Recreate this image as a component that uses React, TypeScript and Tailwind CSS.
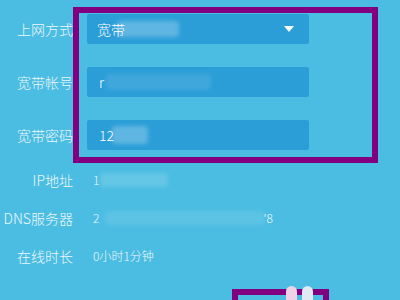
import React from "react";

const font = { fontFamily: '"Noto Sans CJK SC", "Noto Sans", sans-serif' };

function Blur({ w, h, className = "" }: { w: number; h: number; className?: string }) {
  return (
    <span
      className={"inline-block rounded-sm blur-[2px] " + className}
      style={{ width: w, height: h }}
    />
  );
}

function InputRow({ label, children }: { label: string; children: React.ReactNode }) {
  return (
    <div className="flex h-[30px] items-center">
      <div className="w-[73px] text-right text-[14px] font-light leading-none text-[#eef8fc]">{label}</div>
      <div className="ml-[14px] flex h-[30px] w-[222px] items-center rounded-[2px] bg-[#2b9ed8] pl-[10px] text-[14px] font-light text-white">
        {children}
      </div>
    </div>
  );
}

function InfoRow({ label, children }: { label: string; children: React.ReactNode }) {
  return (
    <div className="flex h-[20px] items-center">
      <div className="w-[73px] whitespace-nowrap text-right text-[14px] font-light leading-none text-[#eef8fc]">{label}</div>
      <div className="ml-[20px] flex items-center text-[12px] font-light leading-none text-[#eef8fc]">{children}</div>
    </div>
  );
}

export default function App() {
  return (
    <div className="relative h-[300px] w-[400px] overflow-hidden bg-[#4bbde2]" style={font}>
      <div className="flex flex-col pt-[14px]">
        <div className="flex flex-col gap-[23px]">
          <InputRow label="上网方式">
            <span>宽带</span>
            <Blur w={62} h={16} className="-ml-[8px] bg-white/25" />
            <span className="ml-auto mr-[15px] h-0 w-0 border-l-[5px] border-r-[5px] border-t-[6px] border-l-transparent border-r-transparent border-t-white" />
          </InputRow>
          <InputRow label="宽带帐号">
            <span className="ml-[2px]">r</span>
            <Blur w={105} h={16} className="ml-[2px] bg-white/10" />
          </InputRow>
          <InputRow label="宽带密码">
            <span className="ml-[2px]">12</span>
            <Blur w={36} h={18} className="-ml-[2px] bg-white/25" />
          </InputRow>
        </div>
        <div className="mt-[20px] flex flex-col gap-[18px]">
          <InfoRow label="IP地址">
            <span>1</span>
            <Blur w={68} h={14} className="ml-[1px] bg-white/15" />
          </InfoRow>
          <InfoRow label="DNS服务器">
            <span>2</span>
            <Blur w={160} h={14} className="ml-[6px] bg-white/10" />
            <span className="-ml-[2px]">'8</span>
          </InfoRow>
          <InfoRow label="在线时长">
            <span>0小时1分钟</span>
          </InfoRow>
        </div>
      </div>

      {/* annotation boxes */}
      <div className="absolute left-[73px] top-[7px] h-[156px] w-[305px] border-[6px] border-[#800080]" />
      <div className="absolute left-[232px] top-[289px] h-[30px] w-[97px] border-[6px] border-[#800080]" />
      <div className="absolute left-[286px] top-[286px] h-[20px] w-[11px] rounded-full bg-[#f0d2e8]" />
      <div className="absolute left-[302px] top-[286px] h-[20px] w-[11px] rounded-full bg-[#dfeaf2]" />
    </div>
  );
}
